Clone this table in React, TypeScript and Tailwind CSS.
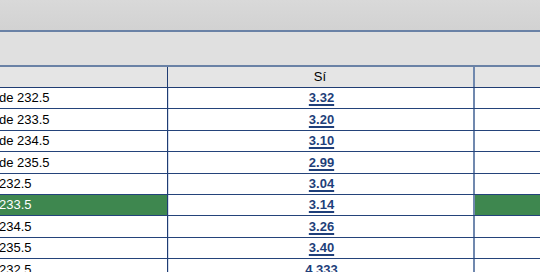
import React from 'react';

interface Row {
  label: string;
  odds: string;
  active?: boolean;
}

const rows: Row[] = [
  { label: 'de 232.5', odds: '3.32' },
  { label: 'de 233.5', odds: '3.20' },
  { label: 'de 234.5', odds: '3.10' },
  { label: 'de 235.5', odds: '2.99' },
  { label: '232.5', odds: '3.04' },
  { label: '233.5', odds: '3.14', active: true },
  { label: '234.5', odds: '3.26' },
  { label: '235.5', odds: '3.40' },
  { label: '232.5', odds: '4.333' },
];

const App: React.FC = () => {
  return (
    <div className="w-[540px] h-[272px] overflow-hidden bg-white font-['Liberation_Sans',Arial,sans-serif] text-[13px]">
      {/* top bars */}
      <div className="h-[30px] bg-gradient-to-b from-[#d9d9d9] to-[#d2d2d2]" />
      <div className="h-[37px] border-y-2 border-[#6a82a6] bg-[#e0e0e0]" />

      {/* header */}
      <div className="flex h-[21px] border-b border-[#1f3c73] bg-[#e5e5e5]">
        <div className="w-[168px] shrink-0 border-r border-[#1f3c73]" />
        <div className="w-[305px] shrink-0 flex items-center justify-center text-black pr-[1px]">
          Sí
        </div>
        <div className="flex-1 border-l-2 border-[#7088ae]" />
      </div>

      {/* rows */}
      {rows.map((row, i) => (
        <div key={i} className="flex h-[21.4px] border-b border-[#24437a]">
          <div
            className={
              'w-[168px] shrink-0 border-r border-[#1f3c73] flex items-center overflow-hidden whitespace-nowrap ' +
              (row.active ? 'bg-[#3e874f] text-white' : 'text-black')
            }
          >
            <span className="-ml-px">{row.label}</span>
          </div>
          <div className="w-[305px] shrink-0 flex items-center justify-center border-l border-[#d3dceb] bg-white">
            <a className="font-bold text-[#1f3f7a] underline underline-offset-[2px] decoration-[1.5px] -mr-[1px]">
              {row.odds}
            </a>
          </div>
          <div
            className={
              'flex-1 border-l-2 border-[#7088ae] ' + (row.active ? 'bg-[#3e874f]' : 'bg-white')
            }
          />
        </div>
      ))}
    </div>
  );
};

export default App;
